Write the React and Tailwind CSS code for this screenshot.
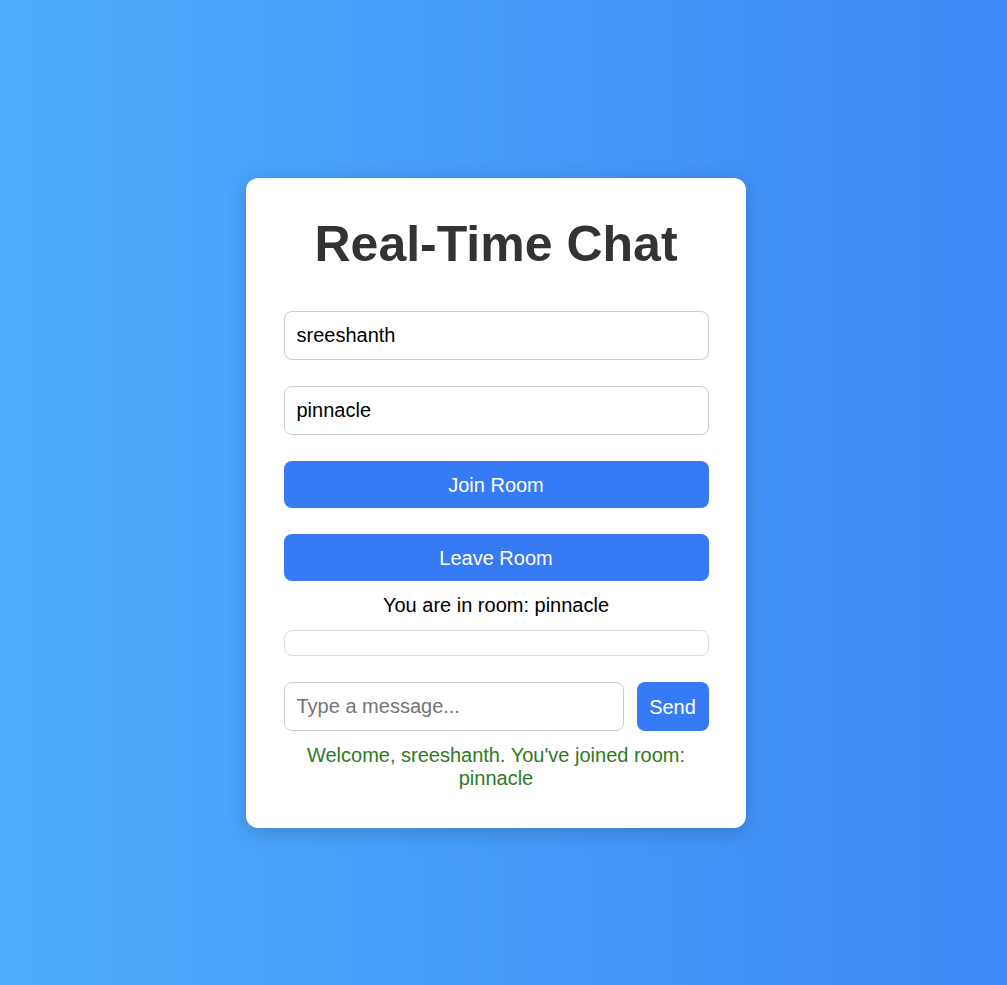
export default function App() {
  return (
    <div
      className="min-h-screen h-[985px] w-full bg-gradient-to-r from-[#4facfb] to-[#3d89f6] pl-[246px] pt-[178px]"
      style={{ fontFamily: '"Liberation Sans", Arial, sans-serif' }}
    >
      <div className="w-[500px] rounded-[12px] bg-white px-[37.5px] pt-[38px] pb-[38px] shadow-[0_4px_20px_rgba(0,0,0,0.18)]">
        <h1 className="mb-[38px] text-center text-[50px] font-bold leading-[57px] text-[#333333]">
          Real-Time Chat
        </h1>

        <input
          type="text"
          defaultValue="sreeshanth"
          className="mb-[26px] block h-[49px] w-full rounded-[8px] border border-[#cccccc] px-[12px] text-[20px] text-black outline-none"
        />
        <input
          type="text"
          defaultValue="pinnacle"
          className="mb-[26px] block h-[49px] w-full rounded-[8px] border border-[#cccccc] px-[12px] text-[20px] text-black outline-none"
        />

        <button className="mb-[26px] block h-[47px] w-full rounded-[8px] bg-[#377af5] text-[20px] text-white">
          Join Room
        </button>
        <button className="mb-[13px] block h-[47px] w-full rounded-[8px] bg-[#377af5] text-[20px] text-white">
          Leave Room
        </button>

        <p className="mb-[13px] text-center text-[20px] leading-[23px] text-black">
          You are in room: pinnacle
        </p>

        {/* messages list (empty) */}
        <div className="mb-[26px] h-[26px] rounded-[8px] border border-[#dddddd]"></div>

        <div className="mb-[13px] flex gap-[13px]">
          <input
            type="text"
            placeholder="Type a message..."
            className="h-[49px] min-w-0 flex-1 rounded-[8px] border border-[#cccccc] px-[12px] text-[20px] text-black outline-none placeholder:text-[#757575]"
          />
          <button className="h-[49px] w-[72px] rounded-[8px] bg-[#377af5] text-[20px] text-white">
            Send
          </button>
        </div>

        <p className="text-center text-[20px] leading-[23px] text-[#2f7a24]">
          Welcome, sreeshanth. You've joined room: pinnacle
        </p>
      </div>
    </div>
  )
}
